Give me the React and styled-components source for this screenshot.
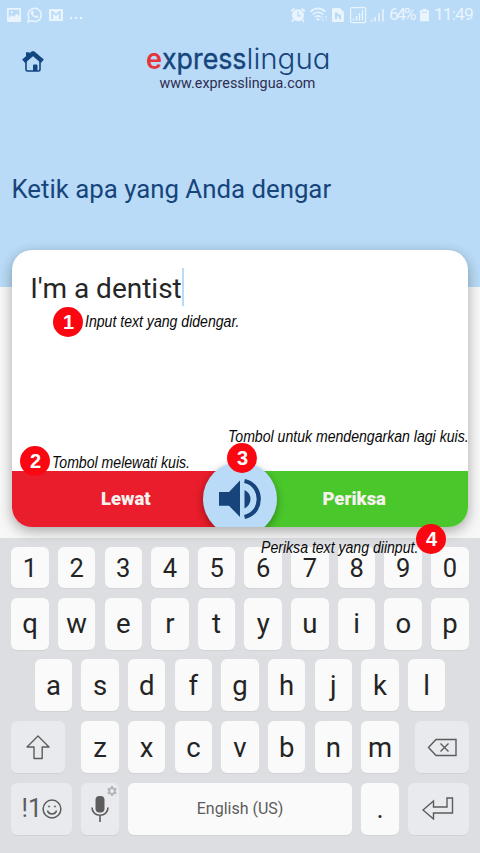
import React from 'react';
import styled, { createGlobalStyle } from 'styled-components';

const GlobalStyle = createGlobalStyle`
  * { box-sizing: border-box; }
  body { margin: 0; background: #dddee2; font-family: Roboto, "Noto Sans", sans-serif; overflow: hidden; }
`;

const Screen = styled.main`
  position: relative;
  width: 480px;
  height: 853px;
  display: flex;
  flex-direction: column;
  overflow: hidden;
  background: #f7f7f7;
`;

const Header = styled.header`
  height: 287px;
  flex: none;
  background: #b9dbf7;
`;

const StatusBar = styled.div`
  height: 30px;
  padding: 0 8px 0 7px;
  display: flex;
  justify-content: space-between;
  color: #e9f4fd;
`;

const StatusGroup = styled.div`
  display: flex;
  align-items: center;
  padding-bottom: 1px;
`;

const StatusIcon = styled.svg`
  display: block;
  flex: none;
  overflow: visible;
  margin-right: ${(p) => p.$gap || 0}px;
`;

const StatusText = styled.span`
  width: ${(p) => p.$width}px;
  font-size: 17.4px;
  line-height: 31px;
  white-space: nowrap;
  margin-right: ${(p) => p.$gap || 0}px;
  letter-spacing: ${(p) => p.$track || 0}px;
`;

const BrandRow = styled.div`
  height: 72px;
  display: grid;
  grid-template-columns: 120px 240px 120px;
`;

const HomeButton = styled.button`
  border: 0;
  background: none;
  padding: 20px 0 0 21px;
  width: 44px;
  height: 44px;
`;

const Brand = styled.div`
  display: flex;
  flex-direction: column;
  align-items: center;
`;

const Logo = styled.svg`
  display: block;
  flex: none;
  margin-left: -5px;
  overflow: visible;
  font-family: Inter, sans-serif;
  font-feature-settings: "cv11";
`;

const Site = styled.div`
  font-size: 14.35px;
  line-height: 18px;
  color: #2f2d52;
  margin-left: -5px;
`;

const Prompt = styled.h1`
  margin: 70px 0 0 11.5px;
  font-size: 25.8px;
  line-height: 34px;
  font-weight: 400;
  color: #17457b;
  white-space: nowrap;
`;

const Card = styled.section`
  width: 456.8px;
  height: 277.5px;
  flex: none;
  margin: -37.5px 0 11px 11.6px;
  border-radius: 20px;
  background: #fff;
  box-shadow: 0 4px 13px rgba(0, 0, 0, 0.33);
  display: flex;
  flex-direction: column;
  overflow: hidden;
  position: relative;
`;

const Answer = styled.div`
  flex: 1;
  padding: 18px 0 0 18.6px;
  display: flex;
  align-items: flex-start;
  font-size: 28px;
  line-height: 41px;
  color: #262626;
  white-space: nowrap;
`;

const Caret = styled.span`
  width: 2px;
  height: 38px;
  background: #b9dbf7;
`;

const Actions = styled.div`
  height: 56.5px;
  display: grid;
  grid-template-columns: 1fr 1fr;
`;

const ActionButton = styled.button`
  border: 0;
  padding: 0;
  background: ${(p) => p.$color};
  color: #f5f1ee;
  font: 900 18.5px Roboto, sans-serif;
`;

const ListenButton = styled.button`
  position: absolute;
  left: 191.4px;
  top: 212px;
  width: 74px;
  height: 74px;
  padding: 0;
  border: 0;
  border-radius: 50%;
  background: #b9dbf7;
  box-shadow: 0 3px 8px rgba(0, 0, 0, 0.35);
`;

const Keyboard = styled.section`
  flex: 1;
  background: #dddee2;
  padding: 9px 11.2px 0;
  display: flex;
  flex-direction: column;
  gap: 9.8px;
`;

const KeyRow = styled.div`
  height: ${(p) => p.$height || 51.9}px;
  display: flex;
  justify-content: ${(p) => p.$justify || 'flex-start'};
  gap: 9.1px;
`;

const KeyGroup = styled.div`
  display: flex;
  gap: 9.1px;
`;

const Key = styled.button`
  position: relative;
  width: ${(p) => p.$width || 37.57}px;
  height: 100%;
  flex: none;
  display: flex;
  align-items: center;
  justify-content: center;
  border: 0;
  padding: ${(p) => p.$pad || '0'};
  border-radius: 6px;
  background: ${(p) => (p.$muted ? '#e9eaee' : '#fafafa')};
  box-shadow: 0 1px 0 rgba(0, 0, 0, 0.05);
  color: ${(p) => (p.$soft ? '#5c5c5c' : '#242424')};
  font: 400 ${(p) => p.$size || 27}px/1 Roboto, sans-serif;
`;

const GearMark = styled.svg`
  position: absolute;
  right: 2px;
  top: 3px;
`;

const Marker = styled.span`
  position: absolute;
  left: ${(p) => p.$x}px;
  top: ${(p) => p.$y}px;
  width: 30px;
  height: 30px;
  padding-left: 1px;
  border-radius: 50%;
  background: #fb0712;
  color: #fff;
  text-align: center;
  font: 700 20px/31px "Liberation Sans", Arial, sans-serif;
`;

const Note = styled.span`
  position: absolute;
  left: ${(p) => p.$x}px;
  top: ${(p) => p.$y}px;
  transform: scaleX(0.815);
  transform-origin: 0 0;
  white-space: nowrap;
  color: #080808;
  font: italic 400 17.3px/20px "Liberation Sans", Arial, sans-serif;
`;

const notes = [
  { n: 1, mx: 53, my: 307, x: 84.5, y: 311, text: 'Input text yang didengar.' },
  { n: 2, mx: 20, my: 445.5, x: 51.5, y: 452, text: 'Tombol melewati kuis.' },
  { n: 3, mx: 227, my: 442.5, x: 227.5, y: 426, text: 'Tombol untuk mendengarkan lagi kuis.' },
  { n: 4, mx: 416, my: 523.5, x: 260.5, y: 537, text: 'Periksa text yang diinput.' },
];

function Status() {
  return (
    <StatusBar>
      <StatusGroup>
        <StatusIcon $gap={6} width="14" height="14" viewBox="0 0 14 14">
          <path fillRule="evenodd" fill="currentColor" d="M1 0h12a1 1 0 0 1 1 1v12a1 1 0 0 1-1 1H1a1 1 0 0 1-1-1V1a1 1 0 0 1 1-1ZM1.7 1.7v8.4L4.5 7l2.2 1.8 3-3.2 2.6 2.6V1.7ZM4 3.2h2v2H4Z" />
        </StatusIcon>
        <StatusIcon $gap={7} width="15" height="16" viewBox="0 0 15 16" fill="none" stroke="currentColor">
          <path strokeWidth="1.5" d="M1 14.8 1.9 11.2A6.6 6.6 0 1 1 4.4 13.7Z" />
          <path fill="currentColor" stroke="none" d="M5.1 3.8 6.2 4l.7 1.8-.8 1.1a5.8 5.8 0 0 0 2.5 2.3l1.1-1 1.9.9c0 1.3-1.1 2-2 2-2.8-.2-5.6-3-5.8-5.5 0-.8.6-1.6 1.3-1.8Z" />
        </StatusIcon>
        <StatusIcon $gap={7} width="14" height="12" viewBox="0 0 14 12">
          <path fillRule="evenodd" fill="currentColor" d="M1 0h12a1 1 0 0 1 1 1v10a1 1 0 0 1-1 1H1a1 1 0 0 1-1-1V1a1 1 0 0 1 1-1ZM2.3 1.8V10.3H4V4.5L7 7l3-2.5v5.8h1.7V1.8h-.9L7 4.8 3.2 1.8Z" />
        </StatusIcon>
        <StatusIcon width="13" height="3" viewBox="0 -4 13 3" fill="currentColor">
          <circle cx="1.2" cy="1" r="1.2" /><circle cx="6" cy="1" r="1.2" /><circle cx="11" cy="1" r="1.2" />
        </StatusIcon>
      </StatusGroup>
      <StatusGroup>
        <StatusIcon $gap={5} width="14" height="14" viewBox="0 0 14 14">
          <circle cx="7" cy="7.3" r="6" fill="currentColor" />
          <path d="M.3 3.2 3.3.6M13.7 3.2 10.7.6M2.8 11.5 1 13.8M11.2 11.5l1.8 2.3" stroke="currentColor" strokeWidth="1.8" />
          <path d="M7 3.8v4h3" fill="none" stroke="#b9dbf7" strokeWidth="1.3" />
        </StatusIcon>
        <StatusIcon $gap={4} width="18" height="15" viewBox="0 0 18 15" fill="none" stroke="currentColor" strokeWidth="1.7">
          <path d="M.6 4.8C5 .3 11 .3 15.4 4.8M2.8 7.5c3-3 7.4-3 10.4 0M5 10.200c2-1.700 4-1.700 6 0" />
          <circle cx="8" cy="12.3" r="1.4" fill="currentColor" stroke="none" />
          <path opacity=".5" strokeWidth="1" d="M12.5 9v5m-1.500-1.500 1.500 1.500 1.500-1.500M16 14V9m-1.500 1.500L16 9l1.500 1.500" />
        </StatusIcon>
        <StatusIcon $gap={6} width="12" height="14" viewBox="0 0 12 14">
          <path fillRule="evenodd" fill="currentColor" d="M1 0h7l4 4v9a1 1 0 0 1-1 1H1a1 1 0 0 1-1-1V1a1 1 0 0 1 1-1ZM3 4.5v6.7h2V8.5h2v2.7h2V6.8H7L5 4.5Z" />
        </StatusIcon>
        <StatusIcon $gap={4} width="16" height="16" viewBox="0 0 16 16">
          <rect x=".6" y=".6" width="15" height="15" rx="1" fill="none" stroke="currentColor" strokeWidth="1.2" />
          <path d="M3.5 13.5v-2M6.5 13.5V9M9.5 13.5V6M12.5 13.5V3" stroke="currentColor" strokeWidth="1.5" />
        </StatusIcon>
        <StatusIcon $gap={5} width="14" height="14" viewBox="0 0 14 14">
          <path d="M0 13.5 2.5 11v2.5Z" fill="currentColor" />
          <path d="M5 13.5V9M9 13.5V5M13 13.5V1" stroke="currentColor" strokeWidth="1.5" />
        </StatusIcon>
        <StatusText $width={27} $gap={4} $track={-2.4}>64%</StatusText>
        <StatusIcon $gap={5} width="9" height="14" viewBox="0 0 10 14">
          <path fill="currentColor" d="M3 0h4v1.500h2a1 1 0 0 1 1 1V13a1 1 0 0 1-1 1H1a1 1 0 0 1-1-1V2.500a1 1 0 0 1 1-1h2Z" />
          <path d="M2 4h6" stroke="#b9dbf7" strokeWidth="1.5" opacity=".7" />
        </StatusIcon>
        <StatusText $width={38} $track={-0.9}>11:49</StatusText>
      </StatusGroup>
    </StatusBar>
  );
}

const letterKeys = (chars, size, pad) =>
  chars.split('').map((c) => <Key key={c} $size={size} $pad={pad}>{c}</Key>);

export default function App() {
  return (
    <Screen>
      <GlobalStyle />
      <Header>
        <Status />
        <BrandRow>
          <HomeButton aria-label="Home">
            <svg width="24" height="22" viewBox="0 0 24 22">
              <path d="M5 10v9.500a1.500 1.500 0 0 0 1.500 1.500h11a1.500 1.500 0 0 0 1.500-1.500V10" fill="none" stroke="#114680" strokeWidth="1.6" />
              <path d="M2.600 11.300 12 3.300l9.400 8" fill="none" stroke="#114680" strokeWidth="4.5" strokeLinejoin="round" />
              <path d="M5 2.300h3.500V7H5Z" fill="#114680" />
              <path d="M12 21v-5.500a1 1 0 0 1 1-1h2.500a1 1 0 0 1 1 1V21Z" fill="#114680" />
            </svg>
          </HomeButton>
          <Brand>
            <Logo width="183" height="45" viewBox="0 0 183 45">
              <text y="38.5" fontSize="28.5" fontWeight="600" fill="#e4343c" textLength="16" lengthAdjust="spacingAndGlyphs">e</text>
              <text x="16" y="38.5" fontSize="28.5" fontWeight="400" stroke="#17457b" strokeWidth=".4" fill="#17457b" textLength="84.5" lengthAdjust="spacingAndGlyphs">xpress</text>
              <text x="100.5" y="38.5" fontSize="28" fontWeight="300" fill="#17457b" textLength="84" lengthAdjust="spacingAndGlyphs">lingua</text>
            </Logo>
            <Site>www.expresslingua.com</Site>
          </Brand>
        </BrandRow>
        <Prompt>Ketik apa yang Anda dengar</Prompt>
      </Header>

      <Card>
        <Answer>I'm a dentist<Caret /></Answer>
        <Actions>
          <ActionButton $color="#e91d2b">Lewat</ActionButton>
          <ActionButton $color="#4ac72b">Periksa</ActionButton>
        </Actions>
        <ListenButton aria-label="Listen">
          <svg width="74" height="74" viewBox="203 462 74 74" fill="#17457b">
            <path d="M219 492h10l11-11.500v36.500l-11-11.200h-10Z" />
            <path d="M244.500 490c8 3.500 8 14.500 0 18.500Z" />
            <path d="M244.500 481c19 4 19 32 0 36" fill="none" stroke="#17457b" strokeWidth="4.2" />
          </svg>
        </ListenButton>
      </Card>

      <Keyboard>
        <KeyRow $height={41}>{letterKeys('1234567890', 25.5, '2px 0 0')}</KeyRow>
        <KeyRow>{letterKeys('qwertyuiop', 27.5, '1px 0 0')}</KeyRow>
        <KeyRow $justify="center">{letterKeys('asdfghjkl', 27.5, '1px 0 0')}</KeyRow>
        <KeyRow $justify="space-between">
          <Key $muted $width={54} aria-label="Shift">
            <svg width="24" height="25" viewBox="0 0 24 25" fill="none" stroke="#5c5c5c" strokeWidth="1.4" strokeLinejoin="round">
              <path d="M12 1 23 12h-6.800v11.500H8V12H1Z" />
            </svg>
          </Key>
          <KeyGroup>{letterKeys('zxcvbnm', 27.5, '1px 0 0')}</KeyGroup>
          <Key $muted $width={54} aria-label="Backspace">
            <svg width="30" height="19" viewBox="0 0 30 19" fill="none" stroke="#5c5c5c" strokeWidth="1.4">
              <path d="M1.500 9.500 9 1.500h20v16H9ZM13.500 5.500l8 8m0-8-8 8" />
            </svg>
          </Key>
        </KeyRow>
        <KeyRow>
          <Key $muted $soft $width={61} $size={25}>
            !1
            <svg width="20" height="20" viewBox="0 0 20 20" fill="none" stroke="#5c5c5c" strokeWidth="1.5">
              <circle cx="10" cy="10" r="8.9" />
              <path d="M5.500 11.500c1 4.500 8 4.500 9 0" />
              <circle cx="7" cy="7.5" r=".7" fill="#5c5c5c" strokeWidth=".6" />
              <circle cx="13" cy="7.5" r=".7" fill="#5c5c5c" strokeWidth=".6" />
            </svg>
          </Key>
          <Key $muted aria-label="Voice input">
            <svg width="18" height="26" viewBox="0 0 18 26">
              <rect x="4.5" y="0" width="9" height="16.5" rx="4" fill="#5c5c5c" />
              <path d="M1 11.500c0 10.300 16 10.300 16 0M9 19.500V26" fill="none" stroke="#5c5c5c" strokeWidth="1.6" />
            </svg>
            <GearMark width="10" height="10" viewBox="0 0 10 10">
              <circle cx="5" cy="5" r="2.9" fill="none" stroke="#b2b3b6" strokeWidth="1.9" />
              <path d="M5 0v2M5 8v2M.7 2.500l1.700 1M7.600 6.500l1.700 1M.7 7.500l1.700-1M7.600 3.500l1.700-1" stroke="#b2b3b6" strokeWidth="2" />
            </GearMark>
          </Key>
          <Key $soft $width={224.3} $size={16}>English (US)</Key>
          <Key $pad="1px 0 0">.</Key>
          <Key $muted $width={61} aria-label="Enter">
            <svg width="32" height="23" viewBox="0 0 32 23" fill="none" stroke="#5c5c5c" strokeWidth="1.4">
              <path d="M1 13 11.500 4v6H25V1h5.500v15h-19v6Z" />
            </svg>
          </Key>
        </KeyRow>
      </Keyboard>

      {notes.map((note) => (
        <React.Fragment key={note.n}>
          <Note $x={note.x} $y={note.y}>{note.text}</Note>
          <Marker $x={note.mx} $y={note.my}>{note.n}</Marker>
        </React.Fragment>
      ))}
    </Screen>
  );
}
